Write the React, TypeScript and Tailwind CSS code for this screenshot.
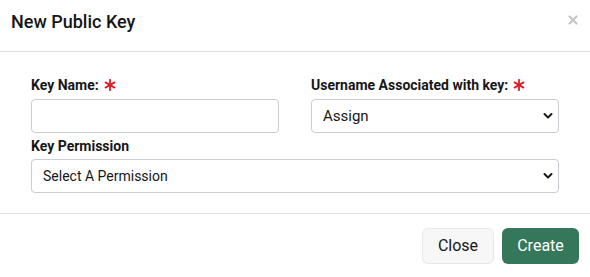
import React from "react";

function Chevron() {
  return (
    <svg
      className="pointer-events-none absolute right-[6px] top-1/2 -translate-y-1/2"
      width="10"
      height="7"
      viewBox="0 0 10 7"
      fill="none"
    >
      <path d="M1.5 1.5 L5 5 L8.5 1.5" stroke="#1a1a1a" strokeWidth="2" strokeLinecap="round" strokeLinejoin="round" />
    </svg>
  );
}

function Required() {
  return (
    <svg className="ml-[5px]" width="12" height="12" viewBox="0 0 12 12" fill="none">
      <g stroke="#da1e28" strokeWidth="1.8" strokeLinecap="round">
        <line x1="6" y1="0.8" x2="6" y2="11.2" />
        <line x1="1.5" y1="3.4" x2="10.5" y2="8.6" />
        <line x1="1.5" y1="8.6" x2="10.5" y2="3.4" />
      </g>
    </svg>
  );
}

export default function App() {
  return (
    <div
      className="w-[590px] h-[277px] bg-white text-[#161616] flex flex-col"
      style={{ fontFamily: "Roboto, 'Noto Sans', sans-serif" }}
    >
      <div className="h-[52px] shrink-0 border-b border-[#e0e0e0] flex items-start justify-between pl-[11px] pr-[12px] pt-[10px]">
        <h1 className="text-[18px] leading-[24px] font-medium text-[#161616]">New Public Key</h1>
        <svg className="mt-[5px]" width="10" height="10" viewBox="0 0 10 10" fill="none">
          <g stroke="#c6c6c6" strokeWidth="2.2" strokeLinecap="round">
            <line x1="1.5" y1="1.5" x2="8.5" y2="8.5" />
            <line x1="8.5" y1="1.5" x2="1.5" y2="8.5" />
          </g>
        </svg>
      </div>
      <div className="h-[162px] shrink-0 border-b border-[#e0e0e0] px-[31px] pt-[23px]">
        <div className="grid grid-cols-2 gap-x-[32px]">
          <div className="flex flex-col">
            <label className="text-[14px] leading-[20px] font-bold mb-[4px] flex items-center">
              Key Name:
              <Required />
            </label>
            <input
              type="text"
              className="h-[34px] w-full rounded-[4px] border border-[#c9ced4] px-[11px] text-[15px] outline-none"
            />
          </div>
          <div className="flex flex-col">
            <label className="text-[14px] leading-[20px] font-bold mb-[4px] flex items-center">
              Username Associated with key:
              <Required />
            </label>
            <div className="relative">
              <select className="h-[34px] w-full appearance-none rounded-[4px] border border-[#c9ced4] bg-white pl-[11px] pr-[24px] text-[15px] text-[#161616] outline-none">
                <option>Assign</option>
              </select>
              <Chevron />
            </div>
          </div>
        </div>
        <div className="flex flex-col mt-[3px]">
          <label className="text-[14px] leading-[20px] font-bold mb-[3px]">Key Permission</label>
          <div className="relative">
            <select className="h-[34px] w-full appearance-none rounded-[4px] border border-[#c9ced4] bg-white pl-[11px] pr-[24px] text-[14px] text-[#161616] outline-none">
              <option>Select A Permission</option>
            </select>
            <Chevron />
          </div>
        </div>
      </div>
      <div className="flex justify-end items-start gap-[8px] pt-[14px] pr-[11px]">
        <button className="h-[36px] w-[72px] rounded-[6px] border border-[#e8e8e8] bg-[#f7f7f7] text-[16px] text-[#161616]">
          Close
        </button>
        <button className="h-[36px] w-[77px] rounded-[6px] bg-[#35775a] text-[16px] text-white">
          Create
        </button>
      </div>
    </div>
  );
}
